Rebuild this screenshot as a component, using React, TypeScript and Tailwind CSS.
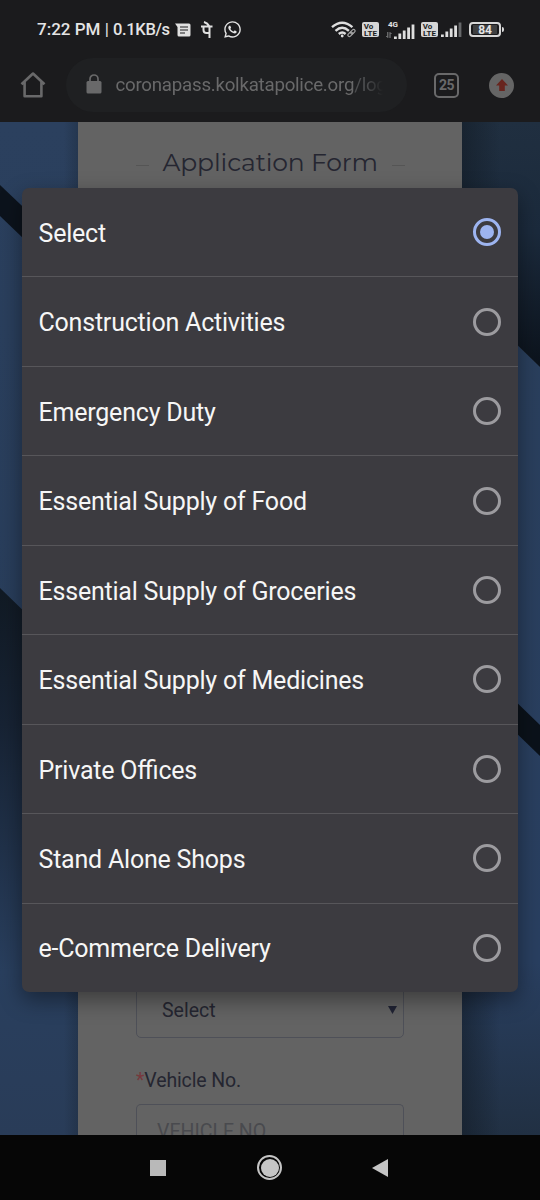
import { FaWhatsapp } from "react-icons/fa"

const options = [
  "Select",
  "Construction Activities",
  "Emergency Duty",
  "Essential Supply of Food",
  "Essential Supply of Groceries",
  "Essential Supply of Medicines",
  "Private Offices",
  "Stand Alone Shops",
  "e-Commerce Delivery",
]

function Volte() {
  return (
    <div className="flex h-[15px] w-[17px] flex-col rounded-[2px] bg-[#d6d6d6] pt-px text-center text-[8px] leading-[7px] font-bold text-[#1c1c1e]">
      <span className="pr-[4px]">Vo</span>
      <span>LTE</span>
    </div>
  )
}

function Signal({ weak = false }: { weak?: boolean }) {
  return (
    <svg width="21" height="15" viewBox="0 0 21 15" fill="#dedede">
      <rect x="0" y="12.5" width="2.8" height="2.5" />
      <rect x="4.4" y="9.5" width="2.8" height="5.5" />
      <rect x="8.8" y="6.5" width="2.8" height="8.5" />
      <rect x="13.2" y="3.5" width="2.8" height="11.5" />
      <rect x="17.6" y="0.5" width="2.8" height="14.5" fill={weak ? "#66686a" : "#dedede"} />
    </svg>
  )
}

function StatusBar() {
  return (
    <div className="flex h-[48px] items-center pt-[11px] pl-[37px] text-[#e4e4e4]">
      <span className="w-[135px] pt-px text-[17px] font-medium whitespace-nowrap">
        7:22 PM <span className="font-normal">|</span> <span className="text-[16.5px] tracking-[-0.35px]">0.1KB/s</span>
      </span>
      <svg className="ml-[3px]" width="16" height="14" viewBox="0 0 16 14">
        <path d="M0 .5h14q1.5 0 1.5 1.5v10q0 1.500-1.500 1.500H4q-1.500 0-1.500-1.500V4z" fill="#e0e0e0" />
        <path d="M5 4h8M5 7h8M5 10h5" stroke="#1c1c1e" strokeWidth="1.2" />
      </svg>
      {/* PhonePe mark */}
      <svg className="ml-[9px]" width="14" height="19" viewBox="0 0 14 19" fill="none" stroke="#e0e0e0" strokeWidth="2">
        <path d="M1 6.500h11.500M9.500 6.500v11.500M3.500 6.500V10q0 3 3 3h3M9.500 6.500Q7.500 3 4 2" />
      </svg>
      <FaWhatsapp className="ml-[9px] size-[19px]" />

      <svg className="ml-[89px]" width="26" height="17" viewBox="0 0 26 17" fill="none" stroke="#dedede" strokeWidth="2.400">
        <path d="M1 6.200q10.200-9 20.400 0M4.500 9.800q6.700-6 13.400 0M7.800 13q3.400-3 6.800 0" />
        <circle cx="11.200" cy="15" r="1.400" fill="#dedede" stroke="none" />
        <g transform="rotate(-45 20.500 12)" stroke="#a5a5a5" strokeWidth="1.200">
          <rect x="16" y="10.500" width="5.200" height="3" rx="1.500" />
          <rect x="19.800" y="10.500" width="5.200" height="3" rx="1.500" />
        </g>
      </svg>
      <div className="ml-[5px]"><Volte /></div>
      <div className="ml-[9px] flex items-end">
        <div className="-mr-[7px] flex h-[18px] w-[13px] flex-col items-start">
          <span className="text-[8px] leading-[8px] font-bold">4G</span>
          <svg className="mt-[3px] -ml-[2px]" width="6" height="6" viewBox="0 0 6 6" fill="none" stroke="#88898b" strokeWidth="1">
            <path d="M1.800 0v5.500L.3 4M4 6V.5L5.500 2" />
          </svg>
        </div>
        <Signal />
      </div>
      <div className="ml-[6px]"><Volte /></div>
      <div className="ml-[3px]"><Signal weak /></div>
      <div className="ml-[7px] flex h-[15px] w-[32px] items-center justify-center rounded-[4px] border-2 border-[#d8d8d8]">
        <span className="h-[9px] bg-[#3f4041] px-[5px] text-[12px] leading-[10px] font-bold tracking-[-0.2px]">84</span>
      </div>
      <div className="ml-px h-[5px] w-[2px] rounded-r bg-[#d8d8d8]" />
    </div>
  )
}

function AddressBar() {
  return (
    <div className="flex h-[74px] items-center pl-[20px] text-[#69696a]">
      <svg width="26" height="27" viewBox="0 0 26 27" fill="none" stroke="currentColor" strokeWidth="2.600" strokeLinejoin="round">
        <path d="M1.500 12.300 13 1.500l11.500 10.800M4.600 10v14.200h16.800V10" />
      </svg>
      <div className="ml-[20px] flex h-[54px] w-[341px] items-center rounded-full bg-[#1f2022] pl-[20px]">
        <svg className="mb-[2px]" width="16" height="20" viewBox="0 0 16 20">
          <path d="M4 9V5a4 4 0 0 1 8 0v4" fill="none" stroke="currentColor" strokeWidth="1.700" />
          <rect x=".5" y="7" width="15" height="12.500" rx="1.500" fill="currentColor" />
        </svg>
        <div className="ml-[13.500px] w-[267px] overflow-hidden text-[18.700px] tracking-[-0.240px] whitespace-nowrap [mask-image:linear-gradient(to_right,black_94%,transparent)]">
          coronapass.kolkatapolice.org<span className="text-[#4c4d4f]">/log</span>
        </div>
      </div>
      <div className="ml-[27px] flex size-[25px] items-center justify-center rounded-[5px] border-[2.500px] border-[#69696a] text-[14px] font-bold tracking-[-0.5px]">
        25
      </div>
      <div className="ml-[30px] flex size-[25px] items-center justify-center rounded-full bg-[#656565]">
        <svg width="12" height="12" viewBox="0 0 12 12" fill="#68251e">
          <path d="M6 0 0 6.500h3.200V12h5.600V6.500H12z" />
        </svg>
      </div>
    </div>
  )
}

function Wallpaper() {
  return (
    <svg className="absolute inset-0" width="540" height="1013" viewBox="0 122 540 1013">
      <defs>
        <linearGradient id="left" x1="0" y1="0" x2="0" y2="1">
          <stop offset="0" stopColor="#2b405e" />
          <stop offset="1" stopColor="#263b58" />
        </linearGradient>
        <linearGradient id="leftLow" x1="0" y1="0" x2="0" y2="1">
          <stop offset="0" stopColor="#111a24" />
          <stop offset=".25" stopColor="#172334" />
          <stop offset=".7" stopColor="#293f5e" />
          <stop offset="1" stopColor="#293c58" />
        </linearGradient>
        <linearGradient id="rightTop" gradientUnits="userSpaceOnUse" x1="0" y1="122" x2="0" y2="367">
          <stop offset="0" stopColor="#202f40" />
          <stop offset=".45" stopColor="#1b2a3c" />
          <stop offset="1" stopColor="#0c131c" />
        </linearGradient>
        <linearGradient id="rightLow" x1="0" y1="0" x2="0" y2="1">
          <stop offset="0" stopColor="#2a3f5c" />
          <stop offset=".8" stopColor="#293f60" />
          <stop offset="1" stopColor="#213043" />
        </linearGradient>
        <linearGradient id="edgeLeft">
          <stop offset="0" stopColor="#101820" stopOpacity="0" />
          <stop offset="1" stopColor="#101820" stopOpacity=".25" />
        </linearGradient>
        <linearGradient id="edgeRight">
          <stop offset="0" stopColor="#101820" stopOpacity=".5" />
          <stop offset="1" stopColor="#101820" stopOpacity="0" />
        </linearGradient>
      </defs>
      <path d="M0 122h270v1013H0z" fill="url(#left)" />
      <path d="M0 185 100 280v32L0 216z" fill="#0c131c" />
      <path d="M0 588 100 685v450H0z" fill="url(#leftLow)" />
      <path d="M270 122h270v245L440 270H270z" fill="url(#rightTop)" />
      <path d="M440 270 540 367v768H440z" fill="url(#rightLow)" />
      <path d="M440 628 540 725v31L440 659z" fill="#0b121a" />
      <path d="M64 122h15v1013H64z" fill="url(#edgeLeft)" />
      <path d="M462 122h38v1013h-38z" fill="url(#edgeRight)" />
    </svg>
  )
}

function ApplicationForm() {
  return (
    <div className="relative mx-auto flex h-full w-[384px] flex-col justify-between bg-[#636363] text-[#252631]">
      <div className="flex items-center justify-center gap-[14px] pt-[22px]">
        <span className="mt-[7px] h-px w-[13px] bg-[#555]" />
        <h1 className="w-[215px] text-center font-['Montserrat','Inter',sans-serif] text-[25px] leading-[36px] font-normal tracking-[-0.130px] whitespace-nowrap">
          Application Form
        </h1>
        <span className="mt-[7px] h-px w-[13px] bg-[#555]" />
      </div>
      <div className="px-[58px]">
        <div className="flex h-[56px] items-center justify-between rounded-[5px] border border-[#4e5058] pr-[6px] pl-[25px] text-[19.500px]">
          <span className="pt-px">Select</span>
          <svg width="9" height="8" viewBox="0 0 9 8" fill="#202334">
            <path d="M0 0h9L4.500 8z" />
          </svg>
        </div>
        <div className="pt-[27px] text-[19.500px] leading-[31px] tracking-[-0.120px]">
          <span className="text-[#77383c]">*</span>Vehicle No.
        </div>
        <div className="mt-[8px] h-[31px] overflow-hidden rounded-t-[5px] border border-b-0 border-[#4e5058] pt-[13px] pl-[20px] text-[19.500px] leading-[28px] text-[#494a4e]">
          VEHICLE NO.
        </div>
      </div>
    </div>
  )
}

function SelectDialog() {
  return (
    <div className="absolute top-[188px] left-[22px] flex h-[804px] w-[496px] flex-col overflow-hidden rounded-[7px] bg-[#3c3b40] shadow-[0_8px_22px_rgba(0,0,0,0.4)]">
      {options.map((option, i) => (
        <div
          key={option}
          className="flex flex-1 items-center justify-between border-b border-[#57565a] pr-[17.500px] pl-[16.500px] text-[25px] tracking-[-0.210px] text-[#f6f6f6] [font-feature-settings:'liga'] last:border-b-0"
        >
          <span className="pt-[3px]">{option}</span>
          {i === 0 ? (
            <span className="flex size-[28px] items-center justify-center rounded-full border-[3px] border-[#9db4f0]">
              <span className="size-[14px] rounded-full bg-[#9db4f0]" />
            </span>
          ) : (
            <span className="size-[28px] rounded-full border-[3px] border-[#9c9b9f]" />
          )}
        </div>
      ))}
    </div>
  )
}

function NavigationBar() {
  return (
    <div className="flex h-[65px] items-center bg-[#060606] pl-[150px]">
      <span className="size-[16px] bg-[#b9b9b9]" />
      <span className="ml-[91px] flex size-[25px] items-center justify-center rounded-full border-2 border-[#c5c5c5]">
        <span className="size-[18px] rounded-full bg-[#c5c5c5]" />
      </span>
      <svg className="ml-[90px]" width="16" height="18" viewBox="0 0 16 18" fill="#c5c5c5">
        <path d="M0 9 16 0v18z" />
      </svg>
    </div>
  )
}

export default function App() {
  return (
    <div className="relative h-[1200px] w-[540px] overflow-hidden bg-[#1b1b1d] font-['Roboto',sans-serif]">
      <StatusBar />
      <AddressBar />
      <div className="relative h-[1013px] overflow-hidden">
        <Wallpaper />
        <ApplicationForm />
      </div>
      <NavigationBar />
      <SelectDialog />
    </div>
  )
}
